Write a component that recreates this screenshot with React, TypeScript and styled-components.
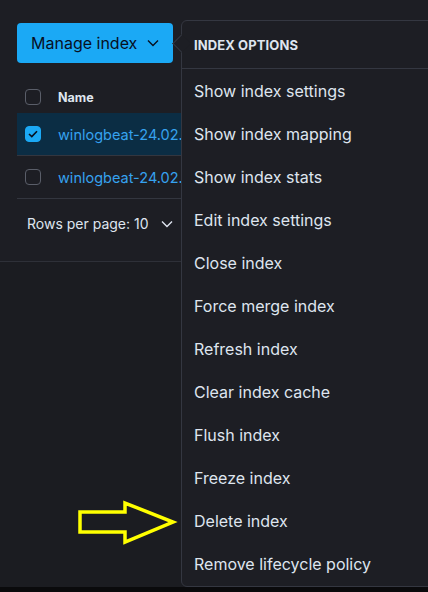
import React from "react";
import styled, { createGlobalStyle } from "styled-components";

const Global = createGlobalStyle`
  html, body { margin: 0; padding: 0; background: #1b1c21; }
  body { font-family: Inter, "Noto Sans", sans-serif; -webkit-font-smoothing: antialiased; }
  * { box-sizing: border-box; }
`;

const Page = styled.div`
  position: relative;
  width: 428px;
  height: 592px;
  overflow: hidden;
  display: flex;
  flex-direction: column;
  background: #1b1c21;
`;

const Panel = styled.div`
  height: 262px;
  background: #1d1e24;
  border-bottom: 1px solid #2e3038;
  padding: 23px 0 0 17px;
  display: flex;
  flex-direction: column;
`;

const Rest = styled.div`
  flex: 1;
`;

const BottomStrip = styled.div`
  height: 5px;
  background: #0a0a0c;
`;

const Button = styled.button`
  width: 156px;
  height: 40px;
  border: none;
  border-radius: 4px;
  background: #1ba9f5;
  color: #07101f;
  font-family: Inter, sans-serif;
  font-size: 16px;
  font-weight: 400;
  display: flex;
  align-items: center;
  padding: 0 0 0 14px;
  gap: 10px;
`;

const Table = styled.div`
  margin-top: 18px;
  width: 220px;
  display: flex;
  flex-direction: column;
`;

const HeaderRow = styled.div`
  height: 32px;
  display: flex;
  align-items: center;
  padding-left: 8px;
  gap: 17px;
`;

const Row = styled.div<{ $selected?: boolean }>`
  height: 43px;
  display: flex;
  align-items: center;
  padding-left: 8px;
  gap: 17px;
  background: ${(p) => (p.$selected ? "#0b2d44" : "transparent")};
  border-bottom: 1px solid #33363f;
  white-space: nowrap;
  overflow: hidden;
`;

const Box = styled.span<{ $checked?: boolean }>`
  flex: none;
  width: 16px;
  height: 16px;
  border-radius: 4px;
  border: 1px solid ${(p) => (p.$checked ? "#1ba9f5" : "#5a5e69")};
  background: ${(p) => (p.$checked ? "#1ba9f5" : "transparent")};
  display: flex;
  align-items: center;
  justify-content: center;
`;

const HeadText = styled.span`
  color: #dfe5ef;
  font-size: 12.5px;
  font-weight: 700;
`;

const LinkText = styled.span`
  color: #36a2ef;
  font-size: 14.5px;
  font-weight: 400;
`;

const Pager = styled.div`
  margin-top: 16px;
  padding-left: 10px;
  display: flex;
  align-items: center;
  gap: 12px;
  color: #dfe5ef;
  font-size: 14px;
`;

const Popover = styled.div`
  position: absolute;
  left: 181px;
  top: 20px;
  width: 260px;
  height: 567px;
  background: #1d1e24;
  border: 1px solid #343741;
  border-radius: 6px;
  display: flex;
  flex-direction: column;
`;

const Arrow = styled.span`
  position: absolute;
  left: -7px;
  top: 16px;
  width: 13px;
  height: 13px;
  background: #1d1e24;
  border-left: 1px solid #343741;
  border-bottom: 1px solid #343741;
  transform: rotate(45deg);
`;

const MenuTitle = styled.div`
  height: 48px;
  border-bottom: 1px solid #343741;
  display: flex;
  align-items: center;
  padding: 1px 0 0 12px;
  color: #dfe5ef;
  font-size: 13px;
  font-weight: 700;
  letter-spacing: 0.1px;
`;

const MenuList = styled.div`
  display: flex;
  flex-direction: column;
`;

const Item = styled.div`
  height: 43px;
  display: flex;
  align-items: center;
  padding-left: 12px;
  color: #dfe5ef;
  font-size: 16px;
  white-space: nowrap;
`;

const Pointer = styled.svg`
  position: absolute;
  left: 76px;
  top: 500px;
`;

const Chevron = ({ color }: { color: string }) => (
  <svg width="12" height="8" viewBox="0 0 12 8" fill="none">
    <path d="M1 1.5l5 5 5-5" stroke={color} strokeWidth="1.4" />
  </svg>
);

const items = [
  "Show index settings",
  "Show index mapping",
  "Show index stats",
  "Edit index settings",
  "Close index",
  "Force merge index",
  "Refresh index",
  "Clear index cache",
  "Flush index",
  "Freeze index",
  "Delete index",
  "Remove lifecycle policy",
];

export default function App() {
  return (
    <Page>
      <Global />
      <Panel>
        <Button>
          Manage index <Chevron color="#07101f" />
        </Button>
        <Table>
          <HeaderRow>
            <Box />
            <HeadText>Name</HeadText>
          </HeaderRow>
          <Row $selected>
            <Box $checked>
              <svg width="10" height="8" viewBox="0 0 10 8" fill="none">
                <path d="M1 4l2.8 2.6L9 1.2" stroke="#07101f" strokeWidth="1.6" />
              </svg>
            </Box>
            <LinkText>winlogbeat-24.02.22</LinkText>
          </Row>
          <Row>
            <Box />
            <LinkText>winlogbeat-24.02.22</LinkText>
          </Row>
        </Table>
        <Pager>
          Rows per page: 10 <Chevron color="#dfe5ef" />
        </Pager>
      </Panel>
      <Rest />
      <BottomStrip />
      <Popover>
        <Arrow />
        <MenuTitle>INDEX OPTIONS</MenuTitle>
        <MenuList>
          {items.map((t) => (
            <Item key={t}>{t}</Item>
          ))}
        </MenuList>
      </Popover>
      <Pointer width="104" height="46" viewBox="0 0 104 46">
        <polygon
          points="4,12 49,12 49,3 97,22 49,42 49,32 4,32"
          fill="none"
          stroke="#ffff00"
          strokeWidth="3.5"
          strokeLinejoin="miter"
        />
      </Pointer>
    </Page>
  );
}
